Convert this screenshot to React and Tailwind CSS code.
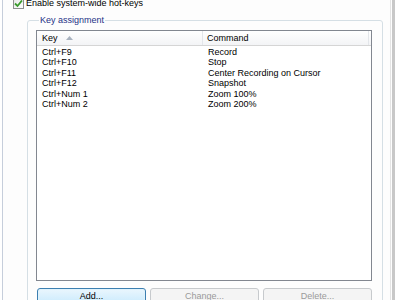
import React from "react";

const rows = [
  ["Ctrl+F9", "Record"],
  ["Ctrl+F10", "Stop"],
  ["Ctrl+F11", "Center Recording on Cursor"],
  ["Ctrl+F12", "Snapshot"],
  ["Ctrl+Num 1", "Zoom 100%"],
  ["Ctrl+Num 2", "Zoom 200%"],
];

export default function App() {
  return (
    <div
      className="w-[400px] h-[300px] overflow-hidden bg-white text-black"
      style={{ fontFamily: '"Liberation Sans", Arial, sans-serif' }}
    >
      <div className="ml-[2px] w-[393px] h-[320px] border-l border-l-[#c6cedb] border-r-[3px] border-r-[#c8c8c8] bg-[#fdfdfd]">
        <div className="mr-[1px] h-full border-r border-r-[#e4e4e4]">
          {/* checkbox row (cut off at top) */}
          <div className="flex items-center pl-[10px] h-[14px] -mt-[4px]">
            <div className="w-[11px] h-[11px] border border-[#8f8f8f] bg-gradient-to-br from-[#e6e6e6] to-white flex items-center justify-center">
              <svg width="9" height="9" viewBox="0 0 9 9">
                <path d="M1 4.5 L3.5 7 L8 1.5" stroke="#3a9a2c" strokeWidth="1.8" fill="none" />
              </svg>
            </div>
            <span className="ml-[2px] text-[9px] leading-[10px]">Enable system-wide hot-keys</span>
          </div>

          <fieldset className="ml-[24px] mr-[7px] mt-[4px] border border-[#d5dfe5] rounded-[3px] pl-[8px] pr-[10px] pb-[20px]">
            <legend className="ml-[3px] px-[1px] text-[9px] leading-[12px] text-[#1e3287]">Key assignment</legend>
            <div className="mt-[4px] h-[251px] border border-[#828790] bg-white flex flex-col">
              <div className="flex h-[15px] border-b border-b-[#d5d5d5] bg-gradient-to-b from-white to-[#f3f4f6] text-[9px] leading-[14px]">
                <div className="w-[166px] flex items-center pl-[5px] border-r border-r-[#e3e6ea]">
                  <span>Key</span>
                  <svg className="ml-[8px]" width="7" height="4" viewBox="0 0 7 4">
                    <path d="M0 4 L3.5 0 L7 4 Z" fill="#a8b2bf" />
                  </svg>
                </div>
                <div className="flex-1 flex items-center pl-[4px] border-r border-r-[#e3e6ea] mr-[2px]">
                  <span>Command</span>
                </div>
              </div>
              <div className="pt-[1px]">
                {rows.map(([k, c]) => (
                  <div key={k} className="flex h-[10.4px] text-[9px] leading-[10.4px]">
                    <div className="w-[166px] pl-[5px]">{k}</div>
                    <div className="pl-[5px]">{c}</div>
                  </div>
                ))}
              </div>
            </div>
            <div className="mt-[7px] ml-[1px] grid grid-cols-3 gap-[4px] text-[9px] leading-[13px]">
              <div className="h-[22px] pt-[1px] rounded-[3px] border border-[#3c7fb1] bg-gradient-to-b from-[#eaf6fd] to-[#bee6fd] text-center shadow-[inset_0_0_0_1px_#dff2fc]">
                Add...
              </div>
              <div className="h-[22px] pt-[1px] rounded-[3px] border border-[#c7cacd] bg-[#f4f4f4] text-center text-[#9a9a9a]">
                Change...
              </div>
              <div className="h-[22px] pt-[1px] rounded-[3px] border border-[#c7cacd] bg-[#f4f4f4] text-center text-[#9a9a9a]">
                Delete...
              </div>
            </div>
          </fieldset>
        </div>
      </div>
    </div>
  );
}
